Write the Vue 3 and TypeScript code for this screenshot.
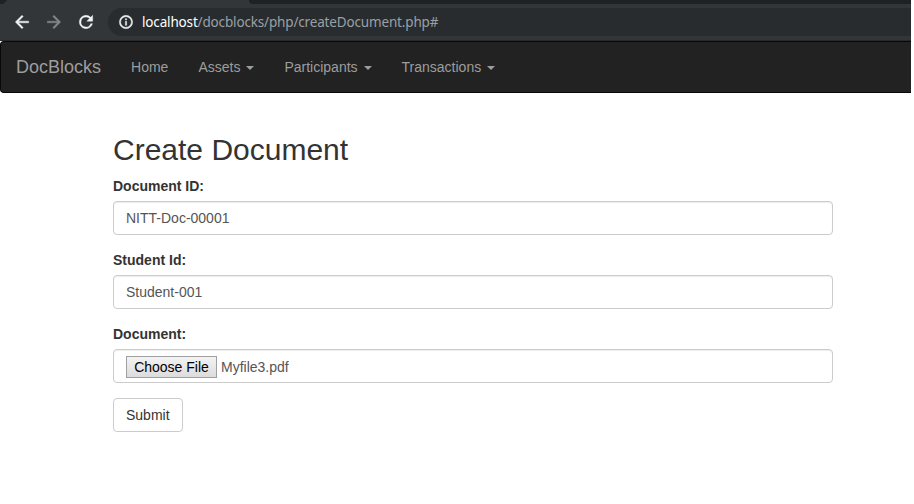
<script setup lang="ts">
import { ref } from 'vue'

interface NavItem {
  label: string
  menu: boolean
}

const navItems: NavItem[] = [
  { label: 'Home', menu: false },
  { label: 'Assets', menu: true },
  { label: 'Participants', menu: true },
  { label: 'Transactions', menu: true },
]

const documentId = ref('NITT-Doc-00001')
const studentId = ref('Student-001')
const fileName = ref('Myfile3.pdf')
</script>

<template>
  <div class="window">
    <header class="chrome">
      <div class="tabstrip"><div class="tab"></div><div class="tabrest"></div></div>
      <div class="toolbar">
        <svg class="icon back" viewBox="0 0 24 24"><path d="M20 11H7.83l5.59-5.59L12 4l-8 8 8 8 1.41-1.41L7.83 13H20z" /></svg>
        <svg class="icon forward" viewBox="0 0 24 24"><path d="M12 4l-1.41 1.41L16.17 11H4v2h12.17l-5.58 5.59L12 20l8-8z" /></svg>
        <svg class="icon reload" viewBox="0 0 24 24"><path d="M17.65 6.35A7.96 7.96 0 0 0 12 4a8 8 0 1 0 7.73 10h-2.08A6 6 0 1 1 12 6c1.66 0 3.14.69 4.22 1.78L13 11h7V4z" /></svg>
        <div class="omnibox">
          <svg class="info" viewBox="0 0 24 24"><path d="M11 17h2v-6h-2zm1-15a10 10 0 1 0 0 20 10 10 0 0 0 0-20zm0 18a8 8 0 1 1 0-16 8 8 0 0 1 0 16zM11 9h2V7h-2z" /></svg>
          <span class="url"><span class="host">localhost</span>/docblocks/php/createDocument.php#</span>
        </div>
      </div>
    </header>
    <nav class="navbar">
      <a class="brand">DocBlocks</a>
      <a v-for="item in navItems" :key="item.label" class="nav-link">{{ item.label }}<span v-if="item.menu" class="caret"></span></a>
    </nav>
    <main class="container">
      <h2>Create Document</h2>
      <form @submit.prevent>
        <div class="group">
          <label for="doc">Document ID:</label>
          <input id="doc" v-model="documentId" class="control" type="text" />
        </div>
        <div class="group">
          <label for="student">Student Id:</label>
          <input id="student" v-model="studentId" class="control" type="text" />
        </div>
        <div class="group">
          <label>Document:</label>
          <div class="control file">
            <button type="button" class="choose">Choose File</button>
            <span>{{ fileName }}</span>
          </div>
        </div>
        <button type="submit" class="submit">Submit</button>
      </form>
    </main>
  </div>
</template>

<style>
body {
  background: #fff;
}
</style>

<style scoped>
* {
  box-sizing: border-box;
}
.window {
  width: 911px;
  height: 504px;
  overflow: hidden;
  font: 14px/20px "Liberation Sans", Arial, sans-serif;
  color: #333;
}
.chrome {
  height: 41px;
  background: #323639;
  border-bottom: 1px solid #28292a;
}
.tabstrip {
  display: flex;
  height: 4px;
  background: #323639;
}
.tab {
  width: 249px;
  background: radial-gradient(circle at 0 -3px, #202124 7px, transparent 8px);
}
.tabrest {
  flex: 1;
  background: #202124;
  border-bottom-left-radius: 6px;
}
.toolbar {
  display: flex;
  align-items: center;
  height: 36px;
  padding-left: 12px;
}
.icon {
  flex: none;
  width: 20px;
  height: 20px;
  margin-right: 12px;
  fill: #f1f3f4;
  stroke: #f1f3f4;
  stroke-width: 0.5;
}
.forward {
  fill: #85888a;
  stroke: #85888a;
}
.omnibox {
  display: flex;
  flex: 1;
  align-items: center;
  height: 28px;
  padding-left: 10px;
  background: #282c2f;
  border-radius: 14px 0 0 14px;
}
.info {
  flex: none;
  width: 16px;
  height: 16px;
  margin-right: 8px;
  fill: #e8eaed;
  stroke: #e8eaed;
  stroke-width: 0.7;
}
.url {
  font: 13.5px/20px "Noto Sans", "Open Sans", sans-serif;
  letter-spacing: -0.16px;
  color: #9aa0a6;
  white-space: nowrap;
}
.host {
  color: #fff;
}
.navbar {
  display: flex;
  height: 52px;
  padding: 0 0 0 15px;
  background: #222;
  border: 1px solid #080808;
  border-radius: 4px 0 0 4px;
  border-right: 0;
  color: #9d9d9d;
}
.brand {
  padding: 15px;
  padding-left: 0;
  font-size: 18px;
}
.nav-link {
  padding: 15px;
}
.caret {
  display: inline-block;
  margin-left: 6px;
  vertical-align: middle;
  border-top: 4px solid;
  border-right: 4px solid transparent;
  border-left: 4px solid transparent;
}
.container {
  width: 720px;
  margin-left: 113px;
  padding-top: 40px;
}
h2 {
  margin: 0 0 10px;
  font-size: 30px;
  font-weight: 400;
  line-height: 33px;
}
.group {
  margin-bottom: 15px;
}
label {
  display: block;
  margin-bottom: 5px;
  font-weight: 700;
}
.control {
  display: block;
  width: 100%;
  height: 34px;
  padding: 6px 12px;
  font: inherit;
  color: #555;
  background: #fff;
  border: 1px solid #ccc;
  border-radius: 4px;
  box-shadow: inset 0 1px 1px rgba(0, 0, 0, 0.075);
}
.file {
  display: flex;
  gap: 4px;
  line-height: 22px;
}
.choose {
  height: 22px;
  width: 91px;
  padding: 0;
  font: 14px/20px "Liberation Sans", Arial, sans-serif;
  color: #000;
  white-space: nowrap;
  background: linear-gradient(#f3f3f3, #dcdcdc);
  border: 1px solid #a0a0a0;
  border-radius: 0;
}
.submit {
  display: block;
  height: 34px;
  padding: 6px 12px;
  font: inherit;
  color: #333;
  background: #fff;
  border: 1px solid #ccc;
  border-radius: 4px;
}
</style>
